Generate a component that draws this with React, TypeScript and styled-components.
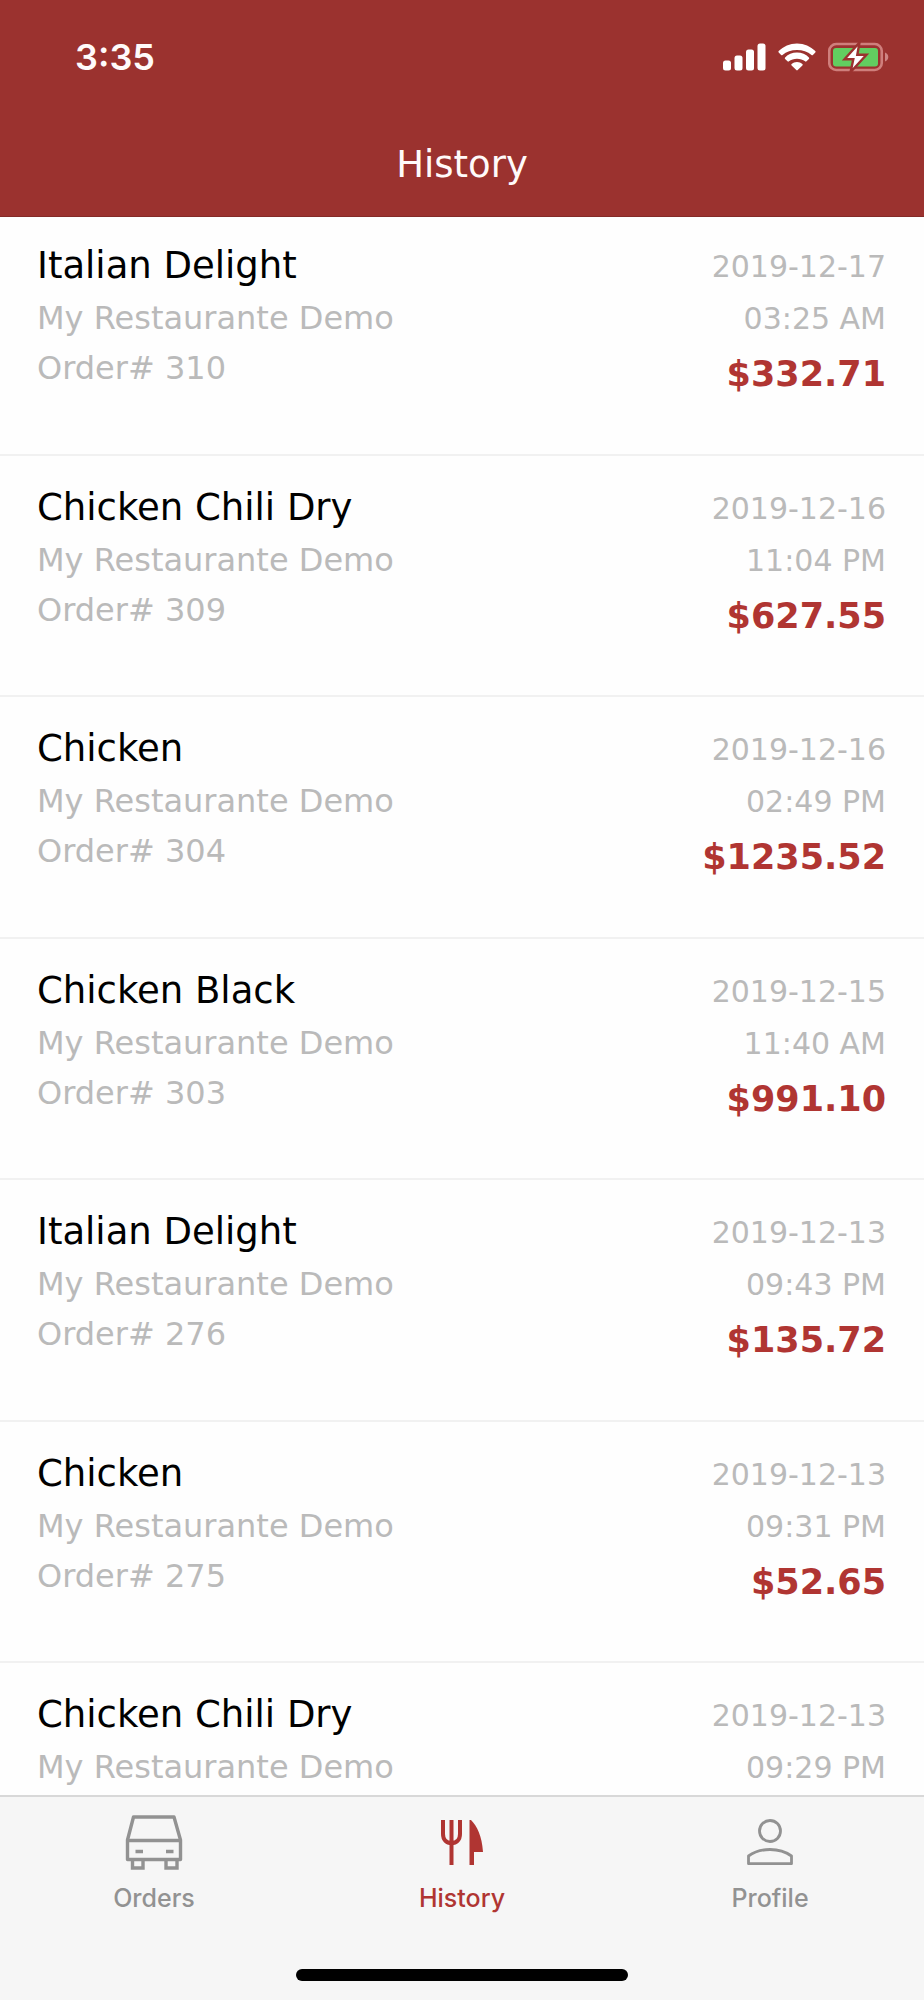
import React from "react";
import styled, { createGlobalStyle } from "styled-components";

const GlobalStyle = createGlobalStyle`
  *, *::before, *::after { box-sizing: border-box; }
  body { margin: 0; background: #fefefe; }
`;

const bodyFont = `Verdana, "DejaVu Sans", sans-serif`;
const systemFont = `Inter, "Liberation Sans", sans-serif`;
const brand = "#9b322f";
const accent = "#b03532";

const Screen = styled.div`
  display: flex;
  flex-direction: column;
  height: 100vh;
  overflow: hidden;
  background: #fefefe;
  font-family: ${bodyFont};
`;

const Header = styled.header`
  flex: none;
  background: ${brand};
  color: #fffafa;
  border-bottom: 1px solid #842b28;
`;

const StatusBar = styled.div`
  display: flex;
  align-items: center;
  justify-content: space-between;
  height: 114px;
  padding: 0 35px 0 75px;
`;

const Clock = styled.time`
  font: 600 36px/44px ${systemFont};
`;

const StatusIcons = styled.div`
  display: flex;
  align-items: center;
  gap: 12px;
`;

const Title = styled.h1`
  margin: 0;
  padding: 28px 0;
  font-size: 37px;
  font-weight: 400;
  line-height: 46px;
  text-align: center;
`;

const OrderList = styled.ul`
  flex: 1;
  min-height: 0;
  overflow: hidden;
  margin: 0;
  padding: 0;
  list-style: none;
`;

const OrderRow = styled.li`
  display: flex;
  justify-content: space-between;
  height: 242px;
  padding: 27px 38px 0 37px;
  border-bottom: 2px solid #f1f1f1;

  &:nth-child(even) {
    height: 241px;
  }

  &:first-child {
    height: 239px;
    padding-top: 24px;
  }
`;

const Details = styled.div`
  min-width: 0;
  padding-top: 2px;
`;

const Summary = styled.div`
  text-align: right;
`;

const Dish = styled.h2`
  margin: 0 0 4px;
  color: #000;
  font-size: 37px;
  font-weight: 400;
  line-height: 46px;
`;

const Note = styled.p`
  margin: 0;
  color: #bababa;
  font-size: 32px;
  line-height: 50px;
`;

const Stamp = styled.time`
  display: block;
  color: #bababa;
  font-size: 30px;
  line-height: 52px;
`;

const Price = styled.p`
  margin: 3px 0 0;
  color: ${accent};
  font-size: 35px;
  font-weight: 700;
  line-height: 52px;
`;

const BottomBar = styled.footer`
  flex: none;
  background: #f6f6f6;
  border-top: 2px solid #d8d8d8;
`;

const Tabs = styled.nav`
  display: flex;
`;

const Tab = styled.button<{ $active?: boolean }>`
  flex: 1;
  display: flex;
  flex-direction: column;
  align-items: center;
  gap: 12px;
  padding: 16px 0 0;
  border: 0;
  background: none;
  color: ${(p) => (p.$active ? accent : "#929292")};
  font: 500 25px/30px ${systemFont};
`;

const HomeIndicator = styled.div`
  width: 36%;
  height: 12px;
  margin: 56px auto 19px;
  border-radius: 6px;
  background: #000;
`;

const SignalIcon = () => (
  <svg width="43" height="28" viewBox="0 0 43 28" fill="#fff" aria-hidden="true">
    <rect x="0" y="17.500" width="8" height="10" rx="2.500" />
    <rect x="11.500" y="12.500" width="8" height="15" rx="2.500" />
    <rect x="23" y="6.500" width="8" height="21" rx="2.500" />
    <rect x="34.500" y="0.500" width="8" height="27" rx="2.500" />
  </svg>
);

const WifiIcon = () => (
  <svg width="38" height="28" viewBox="0 0 38 28" fill="#fff" aria-hidden="true">
    <path d="M19 0.500C26.200 0.500 32.600 3.400 37.300 8.100Q38 8.800 37.300 9.500L34.900 11.900Q34.200 12.600 33.500 11.900C29.700 8.800 24.600 7 19 7S8.300 8.800 4.500 11.900Q3.800 12.600 3.100 11.900L0.700 9.500Q0 8.800 0.700 8.100C5.400 3.400 11.800 0.500 19 0.500Z" />
    <path d="M19 9.600C23.700 9.600 27.900 11.500 30.900 14.500Q31.600 15.200 30.900 15.900L28.500 18.300Q27.800 19 27.100 18.300C25 16.700 22.100 15.800 19 15.800S13 16.700 10.900 18.300Q10.200 19 9.500 18.300L7.100 15.900Q6.400 15.200 7.100 14.500C10.100 11.500 14.300 9.600 19 9.600Z" />
    <path d="M19 18.900C21.100 18.900 23 19.700 24.400 20.900Q25.200 21.600 24.400 22.400L19.700 27.100Q19 27.800 18.300 27.100L13.600 22.400Q12.800 21.600 13.600 20.900C15 19.700 16.900 18.900 19 18.900Z" />
  </svg>
);

const BatteryIcon = () => (
  <svg width="61" height="30" viewBox="0 0 61 30" aria-hidden="true">
    <rect x="1.250" y="2" width="52.500" height="26" rx="7" fill="none" stroke="#cf7f7c" strokeWidth="2.600" />
    <path d="M57 10.500C59 11.200 60.300 13 60.300 15S59 18.800 57 19.500Z" fill="#cf8583" />
    <rect x="5" y="6" width="45" height="18.500" rx="3" fill="#62ce60" />
    <path
      d="M31.500 0.500L16.500 17.200H25.300L22.600 30L38.500 12.800H29.300Z"
      fill="#fff"
      stroke={brand}
      strokeWidth="2.400"
    />
  </svg>
);

const CarIcon = () => (
  <svg width="58" height="58" viewBox="0 0 58 58" fill="none" stroke="currentColor" strokeWidth="3.400" aria-hidden="true">
    <path d="M2.500 27L8.500 4H49L55.500 27V46.500H2.500Z" strokeLinejoin="round" />
    <path d="M2.500 27.500H55.500M7.500 47V55H18V47M41 47V55H52V47" />
    <path d="M10.500 38.500H18M41 38.500H48.500" />
  </svg>
);

const CutleryIcon = () => (
  <svg width="58" height="58" viewBox="0 0 58 58" fill="currentColor" aria-hidden="true">
    <path
      d="M10 7V21C10 27 13.500 30 18.500 30S27 27 27 21V7M18.500 7V52"
      fill="none"
      stroke="currentColor"
      strokeWidth="4"
    />
    <path d="M36.500 7H38C44 13 49 23 50 39H41V52H36.500Z" />
  </svg>
);

const PersonIcon = () => (
  <svg width="58" height="58" viewBox="0 0 58 58" fill="none" stroke="currentColor" strokeWidth="2.800" aria-hidden="true">
    <circle cx="29" cy="18" r="10.500" />
    <path d="M7.500 50.700V43C13 39 21 36.500 29 36.500S45 39 50.500 43V50.700Z" strokeLinejoin="round" />
  </svg>
);

const restaurant = "My Restaurante Demo";

const orders = [
  { id: 310, dish: "Italian Delight", date: "2019-12-17", time: "03:25 AM", total: "$332.71" },
  { id: 309, dish: "Chicken Chili Dry", date: "2019-12-16", time: "11:04 PM", total: "$627.55" },
  { id: 304, dish: "Chicken", date: "2019-12-16", time: "02:49 PM", total: "$1235.52" },
  { id: 303, dish: "Chicken Black", date: "2019-12-15", time: "11:40 AM", total: "$991.10" },
  { id: 276, dish: "Italian Delight", date: "2019-12-13", time: "09:43 PM", total: "$135.72" },
  { id: 275, dish: "Chicken", date: "2019-12-13", time: "09:31 PM", total: "$52.65" },
  { id: null, dish: "Chicken Chili Dry", date: "2019-12-13", time: "09:29 PM", total: null },
];

export default function App() {
  return (
    <Screen>
      <GlobalStyle />
      <Header>
        <StatusBar>
          <Clock>3:35</Clock>
          <StatusIcons>
            <SignalIcon />
            <WifiIcon />
            <BatteryIcon />
          </StatusIcons>
        </StatusBar>
        <Title>History</Title>
      </Header>
      <OrderList>
        {orders.map((order, index) => (
          <OrderRow key={index}>
            <Details>
              <Dish>{order.dish}</Dish>
              <Note>{restaurant}</Note>
              {order.id && <Note>Order# {order.id}</Note>}
            </Details>
            <Summary>
              <Stamp>{order.date}</Stamp>
              <Stamp>{order.time}</Stamp>
              {order.total && <Price>{order.total}</Price>}
            </Summary>
          </OrderRow>
        ))}
      </OrderList>
      <BottomBar>
        <Tabs>
          <Tab type="button">
            <CarIcon />
            Orders
          </Tab>
          <Tab type="button" $active aria-current="page">
            <CutleryIcon />
            History
          </Tab>
          <Tab type="button">
            <PersonIcon />
            Profile
          </Tab>
        </Tabs>
        <HomeIndicator />
      </BottomBar>
    </Screen>
  );
}
